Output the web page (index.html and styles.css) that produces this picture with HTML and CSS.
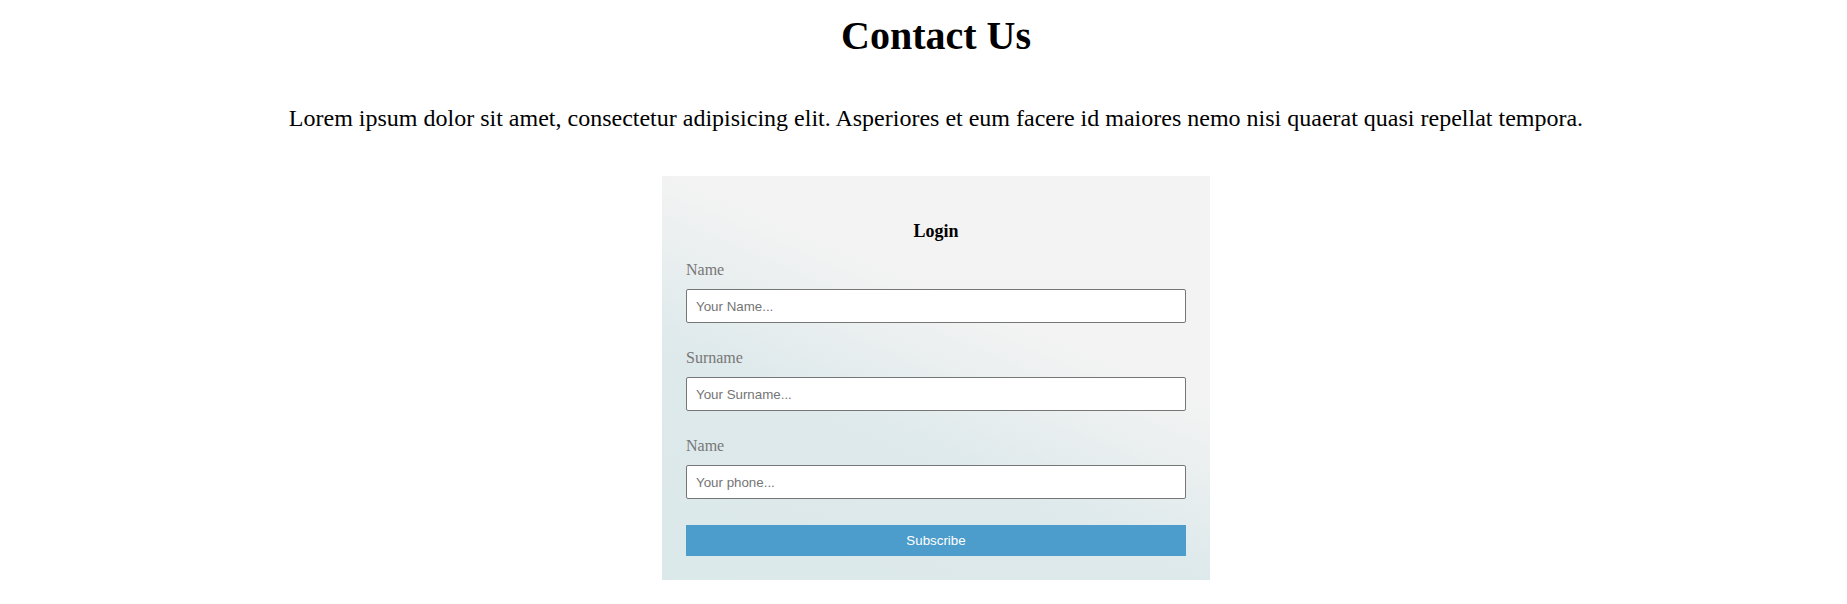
FILE: index.html
```html
<!DOCTYPE html>
<html lang="en">
<head>
<meta charset="utf-8">
<title>Contact Us</title>
<link rel="stylesheet" href="styles.css">
</head>
<body>
<main class="page">
  <h1 class="title">Contact Us</h1>
  <p class="intro">Lorem ipsum dolor sit amet, consectetur adipisicing elit. Asperiores et eum facere id maiores nemo nisi quaerat quasi repellat tempora.</p>
  <form class="card">
    <h3 class="card-title">Login</h3>
    <div class="field">
      <label class="label" for="name">Name</label>
      <input class="input" id="name" type="text" placeholder="Your Name...">
    </div>
    <div class="field">
      <label class="label" for="surname">Surname</label>
      <input class="input" id="surname" type="text" placeholder="Your Surname...">
    </div>
    <div class="field">
      <label class="label" for="phone">Name</label>
      <input class="input" id="phone" type="text" placeholder="Your phone...">
    </div>
    <button class="button" type="button">Subscribe</button>
  </form>
</main>
</body>
</html>
```
FILE: styles.css
```css
html, body {
  margin: 0;
  padding: 0;
  background: #ffffff;
}

body {
  font-family: "Liberation Serif", "Times New Roman", serif;
  color: #000;
}

.page {
  padding-left: 25px;
  display: flex;
  flex-direction: column;
  align-items: center;
}

.title {
  margin: 13px 0 0;
  font-size: 40px;
  line-height: 46px;
  font-weight: bold;
  text-align: center;
}

.intro {
  margin: 45px 0 0;
  font-size: 24px;
  line-height: 28px;
  text-align: center;
}

.card {
  margin-top: 44px;
  width: 500px;
  padding: 24px;
  display: flex;
  flex-direction: column;
  background: linear-gradient(203deg, #f3f3f3 36%, #dde9eb 64%, #dce9eb 100%);
}

.card-title {
  margin: 21px 0 19px;
  font-size: 18px;
  line-height: 21px;
  font-weight: bold;
  text-align: center;
}

.field {
  display: flex;
  flex-direction: column;
  gap: 10px;
  margin-bottom: 26px;
}

.label {
  font-size: 16px;
  line-height: 18px;
  color: #777777;
}

.input {
  box-sizing: border-box;
  height: 34px;
  width: 100%;
  margin: 0;
  padding: 0 9px;
  border: 1px solid #767676;
  border-radius: 2px;
  background: #ffffff;
  font-family: "Liberation Sans", Arial, sans-serif;
  font-size: 13.333px;
  color: #222;
}

.input::placeholder {
  color: #757575;
}

.button {
  height: 31px;
  width: 100%;
  margin: 0;
  border: none;
  background: #4c9dcb;
  color: #ffffff;
  font-family: "Liberation Sans", Arial, sans-serif;
  font-size: 13.333px;
  padding: 0;
}
```
